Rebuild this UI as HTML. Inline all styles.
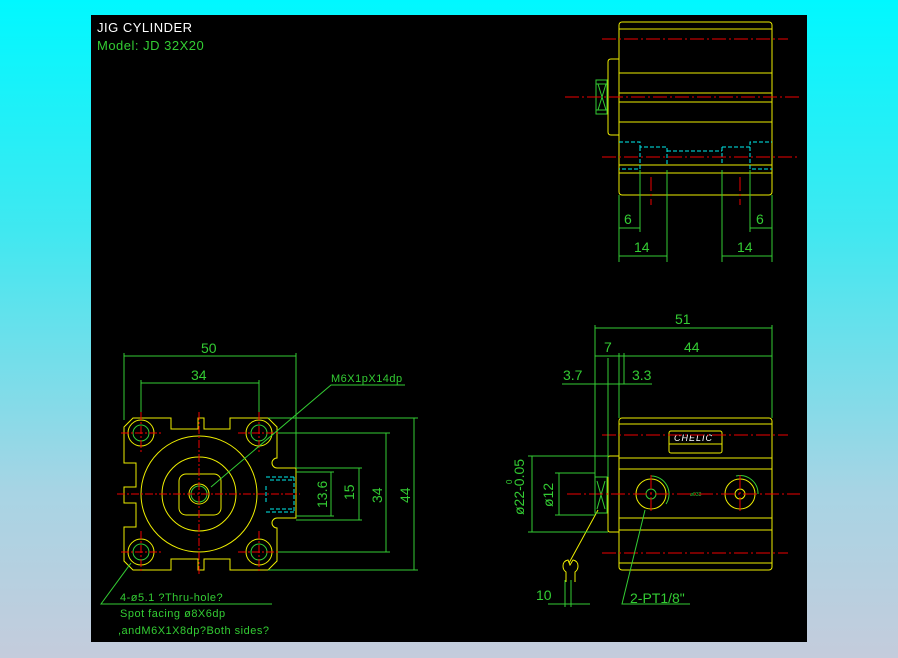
<!DOCTYPE html>
<html><head><meta charset="utf-8"><style>
html,body{margin:0;padding:0;width:898px;height:658px;overflow:hidden;background:linear-gradient(#00f8ff 0%,#40e8f0 35%,#a8d4e4 75%,#c4ccdc 100%);}
svg{position:absolute;left:0;top:0}
text{font-family:"Liberation Sans",sans-serif;}
</style></head><body>
<svg width="898" height="658" viewBox="0 0 898 658">
<rect x="91" y="15" width="716" height="627" fill="#000"/>
<text x="97" y="32" fill="#fff" font-size="13" letter-spacing="0.5">JIG  CYLINDER</text>
<text x="97" y="50" fill="#3c3" font-size="13" letter-spacing="0.5">Model:  JD  32X20</text>

<!-- ===== TOP RIGHT VIEW ===== -->
<g fill="none" stroke="#ee0" stroke-width="1">
<rect x="619" y="22" width="153" height="173" rx="3"/>
<path d="M619 29H772M619 73H772M619 93H772M619 102H772M619 122H772M619 165H772M619 173H772"/>
<path d="M619 59H611Q608 59 608 62V132Q608 135 611 135H619"/>
</g>
<g fill="none" stroke="#3c3"><rect x="596" y="80" width="11" height="34"/><path d="M598 84L606 110M606 84L598 110M596 84H607M596 110H607"/></g>
<g fill="none" stroke="#0ee" stroke-dasharray="4,2"><path d="M619 142H640V147H667V165M640 147V169H619M667 151H722M722 147V165M722 147H750V142H772M750 147V169H772"/></g>
<g fill="none" stroke="#e00" stroke-dasharray="14,3,2,3"><path d="M602 39H788M565 97H800M602 157H800M651 177V205M740 177V205"/></g>
<g fill="none" stroke="#3c3"><path d="M619 195V262M640 170V232M667 170V262M722 170V262M750 170V232M772 195V262M619 228H640M750 228H772M619 256H667M722 256H772"/></g>
<g fill="#3c3" font-size="14"><text x="624" y="224">6</text><text x="756" y="224">6</text><text x="634" y="252">14</text><text x="737" y="252">14</text></g>

<!-- ===== BOTTOM RIGHT VIEW ===== -->
<g fill="none" stroke="#ee0">
<rect x="619" y="418" width="153" height="152" rx="3"/>
<path d="M619 424H772M619 458H772M619 469H772M619 518H772M619 530H772M619 563H772"/>
<path d="M619 456H610Q608 456 608 458V530Q608 532 610 532H619"/>
<rect x="669" y="431" width="53" height="22" rx="2"/><path d="M669 444H722"/>
<circle cx="651" cy="494" r="15"/><circle cx="651" cy="494" r="5" stroke="#3c3"/>
<circle cx="740" cy="494" r="15"/><circle cx="740" cy="494" r="5"/>
<path d="M598 510L569 563"/>
<path d="M566 582V572Q563 570 563 566Q563 561 568 560L570 565L573 560Q578 561 578 566Q578 570 575 572V582"/>
</g>
<text x="674" y="441" fill="#fff" font-size="9" font-style="italic" letter-spacing="1">CHELIC</text>
<path d="M651 476A18 18 0 0 1 666 504M736 476A18 18 0 0 1 758 494" fill="none" stroke="#3c3"/>
<text x="690" y="496" fill="#3c3" font-size="5">ø033</text>
<g fill="none" stroke="#3c3"><rect x="595" y="477" width="12" height="36"/><path d="M597 481L605 509M605 481L597 509"/></g>
<g fill="none" stroke="#e00" stroke-dasharray="14,3,2,3"><path d="M602 435H788M567 494H800M602 553H788M651 475V514M740 475V514"/></g>
<g fill="none" stroke="#3c3">
<path d="M595 328H772M595 356H772M562 384H652M595 325V505M608 358V477M619 353V418M624 353V384M772 325V418"/>
<path d="M532 456V532M528 456H608M528 532H608M559 473V515M555 473H595M555 515H595"/>
<path d="M565 580V607M571 580V607M548 604H590"/>
<path d="M645 510L622 604H690"/>
</g>
<g fill="#3c3" font-size="14">
<text x="675" y="324">51</text><text x="604" y="352">7</text><text x="684" y="352">44</text>
<text x="563" y="380">3.7</text><text x="632" y="380">3.3</text>
<text x="536" y="600">10</text><text x="630" y="603">2-PT1/8"</text>
<text transform="translate(553,507) rotate(-90)">ø12</text>
<text transform="translate(524,515) rotate(-90)">ø22-0.05</text>
<text transform="translate(512,484) rotate(-90)" font-size="8">0</text>
</g>

<!-- ===== FRONT VIEW ===== -->
<g fill="none" stroke="#ee0">
<path d="M133 418H171V429H198V418H204V429H230V418H268L277 427V458A5 5 0 0 0 277 468H296V518H277A5 5 0 0 0 277 528V561L268 570H230V559H204V570H198V559H171V570H133L124 561V527H136V503H124V487H136V463H124V427Z"/>
<circle cx="141" cy="433" r="13"/><circle cx="259" cy="433" r="13"/><circle cx="141" cy="552" r="13"/><circle cx="259" cy="552" r="13"/>
<circle cx="199" cy="494" r="58"/><circle cx="199" cy="494" r="37"/>
<rect x="179" y="474" width="42" height="41" rx="7"/>
<circle cx="199" cy="494" r="10"/>
</g>
<g fill="none" stroke="#3c3"><circle cx="141" cy="433" r="8"/><circle cx="259" cy="433" r="8"/><circle cx="141" cy="552" r="8"/><circle cx="259" cy="552" r="8"/><circle cx="199" cy="494" r="8"/></g>
<g fill="none" stroke="#0ee" stroke-dasharray="4,2"><path d="M266 477H295M266 512H295M270 480H294M270 509H294M266 486V502M294 477V512"/></g>
<g fill="none" stroke="#e00" stroke-dasharray="8,2,2,2"><path d="M121 433H162M238 433H280M121 552H162M238 552H280M141 412V454M259 412V454M141 531V573M259 531V573M117 494H300M199 412V576"/></g>
<g fill="none" stroke="#3c3">
<path d="M124 356H296M141 383H259M124 353V420M296 353V468M141 380V412M259 380V412"/>
<path d="M268 418H418M278 433H390M296 472H334M296 468H362M296 520H362M296 516H334M278 552H390M268 570H418"/>
<path d="M331 472V516M359 468V520M386 433V552M414 418V570"/>
<path d="M405 385H331L211 487"/>
<path d="M131 563L101 604H272"/>
</g>
<g fill="#3c3" font-size="14">
<text x="201" y="353">50</text><text x="191" y="380">34</text>
<text transform="translate(327,508) rotate(-90)">13.6</text>
<text transform="translate(354,500) rotate(-90)">15</text>
<text transform="translate(382,503) rotate(-90)">34</text>
<text transform="translate(410,503) rotate(-90)">44</text>
</g>
<g fill="#3c3" font-size="11" letter-spacing="0.5">
<text x="331" y="382">M6X1pX14dp</text>
<text x="120" y="601">4-ø5.1 ?Thru-hole?</text>
<text x="120" y="617">Spot facing ø8X6dp</text>
<text x="118" y="634">,andM6X1X8dp?Both sides?</text>
</g>
</svg>
</body></html>
